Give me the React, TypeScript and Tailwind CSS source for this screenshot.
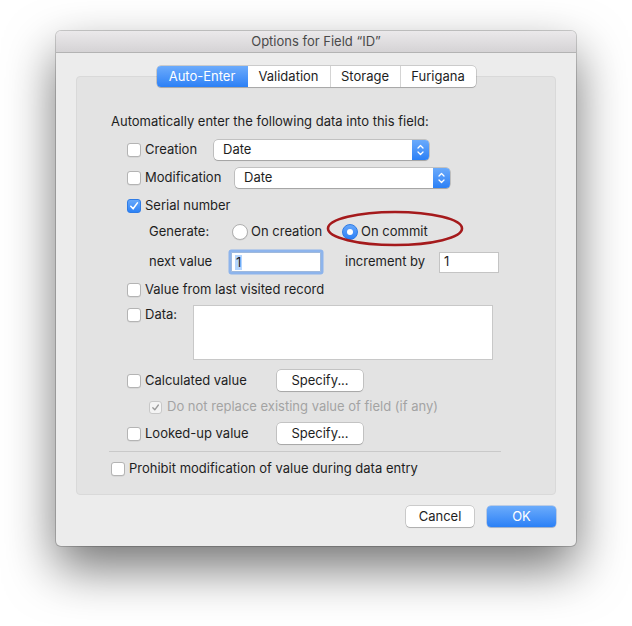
import React from "react";

const font = { fontFamily: 'Inter, "Liberation Sans", Arial, sans-serif' };

function Check({ checked = false, disabled = false }: { checked?: boolean; disabled?: boolean }) {
  if (checked && disabled) {
    return (
      <span className="w-[13px] h-[13px] shrink-0 rounded-[3px] bg-[#f4f4f4] border border-[#c8c8c8] flex items-center justify-center">
        <svg width="9" height="9" viewBox="0 0 10 10">
          <path d="M2 5.3 L4.2 7.6 L8.2 2.2" fill="none" stroke="#9a9a9a" strokeWidth="1.5" strokeLinecap="round" strokeLinejoin="round" />
        </svg>
      </span>
    );
  }
  if (checked) {
    return (
      <span className="w-[14px] h-[14px] shrink-0 rounded-[3px] bg-gradient-to-b from-[#67a8fa] to-[#2c82f6] border border-[#2f7ce6] flex items-center justify-center">
        <svg width="10" height="10" viewBox="0 0 10 10">
          <path d="M1.8 5.3 L4.1 7.8 L8.4 1.9" fill="none" stroke="#fff" strokeWidth="1.6" strokeLinecap="round" strokeLinejoin="round" />
        </svg>
      </span>
    );
  }
  return (
    <span className="w-[14px] h-[14px] shrink-0 rounded-[3px] bg-white border border-[#b4b4b4] shadow-[0_0.5px_0.5px_rgba(0,0,0,0.1)]" />
  );
}

function Radio({ checked = false }: { checked?: boolean }) {
  if (checked) {
    return (
      <span className="w-[16px] h-[16px] shrink-0 rounded-full bg-gradient-to-b from-[#65a6fa] to-[#2a80f6] border border-[#2d7be6] flex items-center justify-center">
        <span className="w-[6px] h-[6px] rounded-full bg-white" />
      </span>
    );
  }
  return <span className="w-[16px] h-[16px] shrink-0 rounded-full bg-white border border-[#b0b0b0] shadow-[0_0.5px_0.5px_rgba(0,0,0,0.1)]" />;
}

function Popup({ width }: { width: string }) {
  return (
    <div className={`${width} h-[20px] flex rounded-[4px] bg-white shadow-[0_0_0_0.5px_rgba(0,0,0,0.3),0_1px_1px_rgba(0,0,0,0.15)]`}>
      <span className="flex-1 pl-[9px] flex items-center text-[13px] text-[#1e1e1e]">Date</span>
      <span className="w-[17px] h-full rounded-r-[4px] bg-gradient-to-b from-[#6aaafb] to-[#2a80f6] flex items-center justify-center">
        <svg width="9" height="14" viewBox="0 0 9 14">
          <path d="M2 5 L4.5 2.5 L7 5" fill="none" stroke="#fff" strokeWidth="1.3" strokeLinecap="round" strokeLinejoin="round" />
          <path d="M2 9 L4.5 11.5 L7 9" fill="none" stroke="#fff" strokeWidth="1.3" strokeLinecap="round" strokeLinejoin="round" />
        </svg>
      </span>
    </div>
  );
}

function Button({ children, width }: { children: React.ReactNode; width: string }) {
  return (
    <div className={`${width} h-[21px] rounded-[4px] bg-white flex items-center justify-center text-[13px] text-[#1e1e1e] shadow-[0_0_0_0.5px_rgba(0,0,0,0.28),0_1px_1px_rgba(0,0,0,0.15)]`}>
      {children}
    </div>
  );
}

export default function App() {
  return (
    <div className="w-[632px] h-[626px] bg-white pt-[31px] pl-[56px]" style={font}>
      <div className="w-[520px] h-[515px] rounded-[5px] bg-[#ececec] flex flex-col shadow-[0_22px_50px_rgba(0,0,0,0.55),0_0_0_1px_rgba(0,0,0,0.18)]">
        {/* title bar */}
        <div className="h-[22px] shrink-0 rounded-t-[5px] bg-gradient-to-b from-[#ebe9eb] to-[#d5d3d5] border-b border-[#b3b3b3] flex items-center justify-center text-[13px] text-[#4a4a4a]">
          Options for Field “ID”
        </div>
        <div className="flex flex-col px-[20px] pt-[13px]">
          {/* tabs */}
          <div className="relative z-10 flex justify-center h-[21px]">
            <div className="flex h-[21px] rounded-[4px] bg-white shadow-[0_0_0_0.5px_rgba(0,0,0,0.28),0_1px_1px_rgba(0,0,0,0.15)] text-[13px] text-[#1e1e1e]">
              <div className="w-[91px] rounded-l-[4px] bg-gradient-to-b from-[#6cabfb] to-[#2b80f6] text-white flex items-center justify-center">Auto-Enter</div>
              <div className="w-[82px] flex items-center justify-center">Validation</div>
              <div className="w-[70px] border-l border-[#d4d4d4] flex items-center justify-center">Storage</div>
              <div className="w-[76px] border-l border-[#d4d4d4] flex items-center justify-center">Furigana</div>
            </div>
          </div>
          {/* group box */}
          <div className="relative -mt-[11px] h-[419px] rounded-[4px] bg-[#e3e3e3] border border-[#d9d9d9] pt-[36px] pl-[34px] flex flex-col text-[13px] text-[#1e1e1e]">
            <div className="h-[18px] flex items-center">Automatically enter the following data into this field:</div>

            <div className="mt-[9px] h-[20px] flex items-center ml-[16px]">
              <Check />
              <span className="ml-[4px] w-[69px]">Creation</span>
              <Popup width="w-[215px]" />
            </div>

            <div className="mt-[8px] h-[20px] flex items-center ml-[16px]">
              <Check />
              <span className="ml-[4px] w-[90px]">Modification</span>
              <Popup width="w-[215px]" />
            </div>

            <div className="mt-[10px] h-[16px] flex items-center ml-[16px]">
              <Check checked />
              <span className="ml-[4px]">Serial number</span>
            </div>

            <div className="mt-[9px] h-[18px] flex items-center ml-[38px]">
              <span className="w-[83px]">Generate:</span>
              <Radio />
              <span className="ml-[3px] w-[91px]">On creation</span>
              <Radio checked />
              <span className="ml-[3px]">On commit</span>
            </div>

            <div className="mt-[10px] h-[22px] flex items-center ml-[38px]">
              <span className="w-[82px]">next value</span>
              <div className="w-[90px] h-[20px] bg-white border border-[#9fb9dc] shadow-[0_0_0_2.5px_#8db4ec] rounded-[1px] flex items-center pl-[3px]">
                <span className="bg-[#b4d5fe] px-[1px] leading-[15px]">1</span>
              </div>
              <span className="ml-[24px] w-[94px]">increment by</span>
              <div className="w-[60px] h-[21px] bg-white border border-[#c4c4c4] flex items-center pl-[4px]">1</div>
            </div>

            <div className="mt-[9px] h-[16px] flex items-center ml-[16px]">
              <Check />
              <span className="ml-[4px]">Value from last visited record</span>
            </div>

            <div className="mt-[7px] h-[55px] flex items-start ml-[16px]">
              <span className="h-[18px] mt-[1px] flex items-center">
                <Check />
                <span className="ml-[4px] w-[48px]">Data:</span>
              </span>
              <div className="w-[300px] h-[55px] bg-white border border-[#c8c8c8]" />
            </div>

            <div className="mt-[10px] h-[21px] flex items-center ml-[16px]">
              <Check />
              <span className="ml-[4px] w-[132px]">Calculated value</span>
              <Button width="w-[86px]">Specify...</Button>
            </div>

            <div className="mt-[8px] h-[16px] flex items-center ml-[38px] text-[#a3a3a3]">
              <Check checked disabled />
              <span className="ml-[5px]">Do not replace existing value of field (if any)</span>
            </div>

            <div className="mt-[8px] h-[21px] flex items-center ml-[16px]">
              <Check />
              <span className="ml-[4px] w-[132px]">Looked-up value</span>
              <Button width="w-[86px]">Specify...</Button>
            </div>

            <div className="mt-[7px] h-[1px] w-[392px] -ml-[2px] bg-[#c9c9c9]" />

            <div className="mt-[9px] h-[16px] flex items-center">
              <Check />
              <span className="ml-[4px]">Prohibit modification of value during data entry</span>
            </div>

            {/* red annotation ellipse */}
            <svg className="absolute left-[249px] top-[133px]" width="138" height="37" viewBox="0 0 138 37">
              <ellipse cx="69" cy="18.5" rx="67" ry="16.5" fill="none" stroke="#a51a1c" strokeWidth="2.6" />
            </svg>
          </div>

          {/* bottom buttons */}
          <div className="mt-[11px] flex justify-end gap-[13px]">
            <Button width="w-[68px]">Cancel</Button>
            <div className="w-[69px] h-[21px] rounded-[4px] bg-gradient-to-b from-[#6aabfb] to-[#2a80f6] flex items-center justify-center text-[13px] text-white shadow-[0_0_0_0.5px_rgba(0,80,200,0.4),0_1px_1px_rgba(0,0,0,0.15)]">
              OK
            </div>
          </div>
        </div>
      </div>
    </div>
  );
}
